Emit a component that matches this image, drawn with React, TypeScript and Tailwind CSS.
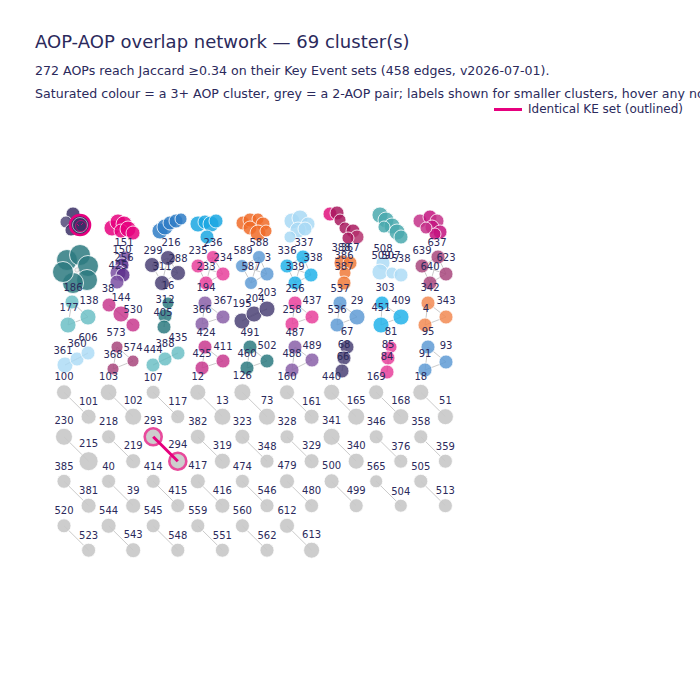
import React from 'react';

type Node = [number, number, number, string];
type Label = [string, number, number];

interface Cluster {
  nodes: Node[];
  labels: Label[];
  edges?: boolean;
}

const C = {
  dp: '#3b3066',
  mg: '#e6007e',
  bl: '#2f7dc6',
  cy: '#1ba7e2',
  or: '#f06b28',
  lb: '#a9d9f4',
  cr: '#a8195e',
  tl: '#4aa9ae',
  pk: '#c4318a',
  mk: '#c3127f',
  td: '#2d7a80',
  pu: '#7a50a2',
  pd: '#5c2e8c',
  sl: '#4b4276',
  hp: '#e8409b',
  mb: '#5f9bd5',
  cy2: '#22b3ea',
  or2: '#f07a3a',
  lb2: '#aedcf6',
  dpk: '#a8477c',
  tl2: '#6cbfc6',
  pk2: '#c8388e',
  pu2: '#8a60a8',
  or3: '#f28a52',
};

const INK = '#2b2a5c';
const FONT = '"DejaVu Sans", Verdana, sans-serif';

const clusters: Cluster[] = [
  // row 1 - big clusters
  { nodes: [[112, 228, 8, C.mg], [118, 222, 8, C.mg], [124, 224, 8, C.mg], [121, 231, 7, C.mg], [128, 229, 8, C.mg], [133, 233, 7, C.mg]], labels: [['151', 124, 242]] },
  { nodes: [[160, 231, 8, C.bl], [165, 227, 8, C.bl], [170, 223, 7, C.bl], [176, 221, 7, C.bl], [181, 219, 6, C.bl]], labels: [['216', 171, 242]] },
  { nodes: [[198, 224, 8, C.cy], [205, 222, 7, C.cy], [211, 224, 8, C.cy], [216, 221, 7, C.cy], [207, 237, 7, C.cy]], labels: [['236', 213, 242]] },
  { nodes: [[243, 223, 7, C.or], [250, 220, 7, C.or], [258, 219, 6, C.or], [263, 224, 7, C.or], [250, 228, 7, C.or], [258, 233, 8, C.or], [266, 231, 6, C.or]], labels: [['588', 259, 242]] },
  { nodes: [[292, 221, 8, C.lb], [300, 218, 8, C.lb], [308, 224, 7, C.lb], [298, 230, 8, C.lb], [290, 237, 6, C.lb], [305, 229, 7, C.lb]], labels: [['337', 304, 242]] },
  { nodes: [[330, 214, 7, '#e0107d'], [337, 213, 7, C.cr], [340, 220, 6, C.cr], [345, 228, 6, C.cr], [353, 231, 7, C.cr], [357, 237, 7, '#b5336f'], [348, 238, 6, C.cr]], labels: [['388', 341, 247], ['367', 350, 247]] },
  { nodes: [[380, 215, 8, C.tl], [386, 220, 8, C.tl], [392, 226, 8, C.tl], [397, 232, 8, C.tl], [401, 237, 7, C.tl], [384, 227, 6, C.tl]], labels: [['508', 383, 248]] },
  { nodes: [[420, 221, 7, C.pk], [430, 217, 7, C.mk], [437, 221, 7, C.pk], [432, 227, 7, C.mk], [440, 232, 7, C.mk], [435, 234, 6, C.mk], [426, 228, 6, C.pk]], labels: [['637', 437, 242]] },

  // row 2
  { nodes: [[67, 260, 10.5, C.td], [80, 255, 10.5, C.td], [88, 266, 10.5, C.td], [87, 280, 10.5, C.td], [73, 283, 10.5, C.td], [63, 272, 10.5, C.td]], labels: [['186', 73, 287]] },
  { nodes: [[125, 257, 6, C.pu], [122, 265, 7, C.pd], [118, 273, 8, C.pu], [123, 275, 7, C.pd], [117, 282, 7, C.pu]], labels: [['150', 122, 249], ['256', 124, 257], ['425', 118, 265]] },
  { nodes: [[152, 265, 7.5, C.sl], [168, 258, 7.5, C.sl], [178, 273, 7.5, C.sl], [162, 283, 7.5, C.sl]], labels: [['299', 153, 250], ['311', 162, 266], ['288', 178, 258], ['16', 168, 285]], edges: true },
  { nodes: [[198, 266, 7, C.hp], [213, 257, 6.5, C.hp], [223, 274, 7, C.hp], [206, 283, 7, C.hp]], labels: [['235', 198, 250], ['234', 223, 257], ['233', 206, 266], ['194', 206, 287]], edges: true },
  { nodes: [[242, 266, 6.5, C.mb], [259, 257, 6.5, C.mb], [267, 274, 7, C.mb], [251, 283, 6.5, C.mb]], labels: [['589', 243, 250], ['3', 268, 257], ['587', 251, 266]], edges: true },
  { nodes: [[287, 266, 7, C.cy2], [303, 257, 7, C.cy2], [311, 275, 7, C.cy2], [295, 283, 7, C.cy2]], labels: [['336', 287, 250], ['338', 313, 257], ['339', 295, 266], ['256', 295, 288]], edges: true },
  { nodes: [[342, 263, 8, C.or2], [350, 263, 7, C.or2], [345, 273, 6, C.or2], [344, 283, 7, C.or2]], labels: [['386', 344, 255], ['387', 344, 266], ['537', 340, 288]] },
  { nodes: [[383, 263, 7, C.lb2], [380, 272, 8, C.lb2], [392, 273, 6, C.lb2], [401, 275, 7, C.lb2]], labels: [['509', 381, 255], ['507', 391, 255], ['538', 401, 258], ['303', 385, 287]] },
  { nodes: [[422, 266, 7, C.dpk], [438, 257, 7, C.dpk], [446, 274, 7, C.dpk], [430, 283, 7, C.dpk]], labels: [['639', 422, 250], ['623', 446, 257], ['640', 430, 266], ['342', 430, 287]], edges: true },

  // row 3
  { nodes: [[72, 302, 7, C.tl2], [88, 317, 8, C.tl2], [68, 325, 8, C.tl2]], labels: [['138', 89, 300], ['177', 69, 307]], edges: true },
  { nodes: [[109, 305, 7, C.pk2], [121, 314, 8, C.pk2], [133, 325, 7, C.pk2]], labels: [['38', 108, 288], ['144', 121, 297], ['530', 133, 309]], edges: true },
  { nodes: [[168, 303, 6, C.td], [165, 316, 7, C.td], [164, 327, 7, C.td]], labels: [['312', 165, 299], ['405', 163, 312]], edges: true },
  { nodes: [[205, 303, 7, C.pu2], [223, 317, 7, C.pu2], [202, 324, 7, C.pu2]], labels: [['367', 223, 300], ['366', 202, 309], ['424', 206, 332]], edges: true },
  { nodes: [[242, 321, 8, C.sl], [254, 314, 8, C.sl], [267, 309, 8, C.sl]], labels: [['195', 242, 303], ['204', 255, 298], ['203', 267, 292], ['491', 250, 332]], edges: true },
  { nodes: [[295, 303, 7, C.hp], [312, 317, 7, C.hp], [292, 324, 7, C.hp]], labels: [['437', 312, 300], ['258', 292, 309], ['487', 295, 332]], edges: true },
  { nodes: [[340, 303, 7, C.mb], [357, 317, 8, C.mb], [337, 325, 7, C.mb]], labels: [['29', 357, 300], ['536', 337, 309], ['67', 347, 331]], edges: true },
  { nodes: [[382, 303, 7, C.cy2], [401, 317, 8, C.cy2], [381, 325, 8, C.cy2]], labels: [['409', 401, 300], ['451', 381, 307], ['81', 391, 331]], edges: true },
  { nodes: [[428, 303, 7, C.or3], [446, 317, 7, C.or3], [425, 325, 7, C.or3]], labels: [['343', 446, 300], ['4', 426, 308], ['95', 428, 331]], edges: true },

  // row 4
  { nodes: [[65, 365, 8, C.lb2], [77, 359, 7, C.lb2], [88, 353, 7, C.lb2]], labels: [['606', 88, 337], ['360', 77, 343], ['361', 63, 350]], edges: true },
  { nodes: [[117, 347, 6, C.dpk], [133, 361, 6, C.dpk], [113, 369, 6, C.dpk]], labels: [['573', 116, 332], ['574', 133, 347], ['368', 113, 354]], edges: true },
  { nodes: [[153, 365, 7, C.tl2], [165, 359, 7, C.tl2], [178, 353, 7, C.tl2]], labels: [['444', 153, 349], ['388', 165, 343], ['435', 178, 337]], edges: true },
  { nodes: [[205, 347, 7, C.pk2], [223, 361, 7, C.pk2], [202, 368, 7, C.pk2]], labels: [['411', 223, 346], ['425', 202, 353]], edges: true },
  { nodes: [[250, 347, 7, C.td], [267, 361, 7, C.td], [247, 368, 7, C.td]], labels: [['502', 267, 345], ['460', 247, 353]], edges: true },
  { nodes: [[295, 347, 7, C.pu2], [312, 360, 7, C.pu2], [292, 370, 7, C.pu2]], labels: [['489', 312, 345], ['488', 292, 353]], edges: true },
  { nodes: [[347, 347, 7, C.sl], [344, 358, 7, C.sl], [342, 371, 7, C.sl]], labels: [['68', 344, 344], ['66', 343, 356]], edges: true },
  { nodes: [[391, 347, 6, C.hp], [388, 358, 7, C.hp], [387, 372, 7, C.hp]], labels: [['85', 388, 344], ['84', 387, 356]], edges: true },
  { nodes: [[428, 347, 7, C.mb], [446, 362, 7, C.mb], [425, 370, 7, C.mb]], labels: [['93', 446, 345], ['91', 425, 353]], edges: true },
];

// 2-AOP pairs: [first id, r, second id, r]
const pairRows: [string, number, string, number][][] = [
  [['100', 7.5, '101', 7.5], ['103', 8.3, '102', 8.5], ['107', 7, '117', 7], ['12', 8, '13', 8.5], ['126', 8.5, '73', 8.5], ['160', 7.5, '161', 7.5], ['440', 8, '165', 8.5], ['169', 7.5, '168', 8], ['18', 8, '51', 8]],
  [['230', 8.5, '215', 9.5], ['218', 7, '219', 7.5], ['293', 8.5, '294', 8.5], ['382', 7.5, '319', 8], ['323', 7.5, '348', 7], ['328', 7, '329', 7.5], ['341', 8.5, '340', 8], ['346', 7, '376', 7], ['358', 7, '359', 7]],
  [['385', 7, '381', 7.5], ['40', 7, '39', 7.5], ['414', 7, '415', 7], ['417', 7.5, '416', 7.5], ['474', 7, '546', 7], ['479', 7.5, '480', 7], ['500', 7.5, '499', 7], ['565', 6.5, '504', 6.5], ['505', 7, '513', 7]],
  [['520', 7, '523', 7], ['544', 7.5, '543', 7.5], ['545', 7, '548', 7], ['559', 7, '551', 7], ['560', 7, '562', 7], ['612', 7.5, '613', 8]],
];

const GREY = '#c8c8c8';
const EDGE = '#c4c4c4';

function NodeLabel({ t, x, y }: { t: string; x: number; y: number }) {
  return (
    <text x={x} y={y + 3.6} textAnchor="middle" fontSize={10} fill={INK} fontFamily={FONT}>
      {t}
    </text>
  );
}

function ClusterGroup({ c }: { c: Cluster }) {
  const edges: [Node, Node][] = [];
  if (c.edges) {
    c.nodes.forEach((a, i) => c.nodes.slice(i + 1).forEach((b) => edges.push([a, b])));
  }
  return (
    <g>
      {edges.map(([a, b], i) => (
        <line key={i} x1={a[0]} y1={a[1]} x2={b[0]} y2={b[1]} stroke={EDGE} strokeWidth={0.9} />
      ))}
      {c.nodes.map(([x, y, r, col], i) => (
        <circle key={i} cx={x} cy={y} r={r} fill={col} fillOpacity={0.85} stroke="#ffffff" strokeWidth={0.8} />
      ))}
      {c.labels.map(([t, x, y], i) => (
        <NodeLabel key={i} t={t} x={x} y={y} />
      ))}
    </g>
  );
}

function PairGroup({ col, row, p }: { col: number; row: number; p: [string, number, string, number] }) {
  const x0 = 64 + col * 44.6;
  const y0 = 392.3 + row * 44.5;
  const x1 = x0 + 24.6;
  const y1 = y0 + 24.4;
  const outlined = p[0] === '293';
  return (
    <g>
      <line x1={x0} y1={y0} x2={x1} y2={y1} stroke={EDGE} strokeWidth={0.9} />
      <circle cx={x0} cy={y0} r={p[1]} fill={GREY} fillOpacity={0.9} stroke={outlined ? '#e84a9c' : '#ffffff'} strokeWidth={outlined ? 2.6 : 0.8} />
      <circle cx={x1} cy={y1} r={p[3]} fill={GREY} fillOpacity={0.9} stroke={outlined ? '#e84a9c' : '#ffffff'} strokeWidth={outlined ? 2.6 : 0.8} />
      {outlined && <line x1={x0} y1={y0} x2={x1} y2={y1} stroke="#e6007e" strokeWidth={3} />}
      <NodeLabel t={p[0]} x={x0} y={y0 - p[1] - 8} />
      <NodeLabel t={p[2]} x={x1} y={y1 - p[3] - 8} />
    </g>
  );
}

function FirstCluster() {
  // mixed cluster with an identical-KE-set group outlined in magenta
  return (
    <g>
      <circle cx={73} cy={214} r={7} fill={C.dp} fillOpacity={0.85} stroke="#fff" strokeWidth={0.8} />
      <circle cx={66} cy={222} r={6} fill="#5d5482" fillOpacity={0.9} stroke="#fff" strokeWidth={0.8} />
      <circle cx={71} cy={230} r={6} fill={C.dp} fillOpacity={0.85} stroke="#fff" strokeWidth={0.8} />
      <circle cx={80} cy={225} r={10} fill={C.dp} stroke={C.mg} strokeWidth={2.6} />
      <circle cx={80} cy={225} r={7.5} fill="none" stroke="#ffffff" strokeWidth={0.7} opacity={0.8} />
      <circle cx={81} cy={226} r={5.5} fill="none" stroke={C.mg} strokeWidth={0.7} />
      <path d="M77 224 l2 2 M83 223 l-2 2" stroke={C.mg} strokeWidth={0.8} />
    </g>
  );
}

function Flower() {
  return <circle cx={77} cy={270} r={2.2} fill="#f2f2f2" stroke="#bbbbbb" strokeWidth={0.6} />;
}

export default function App() {
  return (
    <div className="w-[700px] h-[700px] overflow-hidden bg-white" style={{ fontFamily: FONT }}>
      <div className="h-[120px] pl-[35px] pt-[31px] text-[#2b2a5c]">
        <h1 className="text-[18px] leading-[22px] font-normal">AOP-AOP overlap network — 69 cluster(s)</h1>
        <p className="mt-[9px] text-[12.6px] leading-[18px] whitespace-nowrap">
          272 AOPs reach Jaccard ≥0.34 on their Key Event sets (458 edges, v2026-07-01).
        </p>
        <p className="mt-[5px] text-[12.6px] leading-[18px] whitespace-nowrap">
          Saturated colour = a 3+ AOP cluster, grey = a 2-AOP pair; labels shown for smaller clusters, hover any node for details.
        </p>
        <div className="-mt-[2px] ml-[459px] flex items-center gap-[6px]">
          <span className="w-[28px] h-[3px] bg-[#e6007e]" />
          <span className="text-[12px] leading-[16px]">Identical KE set (outlined)</span>
        </div>
      </div>
      <svg width={700} height={580} viewBox="0 120 700 580" className="block">
        <FirstCluster />
        {clusters.map((c, i) => (
          <ClusterGroup key={i} c={c} />
        ))}
        <Flower />
        {pairRows.map((row, r) =>
          row.map((p, c) => <PairGroup key={`${r}-${c}`} col={c} row={r} p={p} />)
        )}
      </svg>
    </div>
  );
}
